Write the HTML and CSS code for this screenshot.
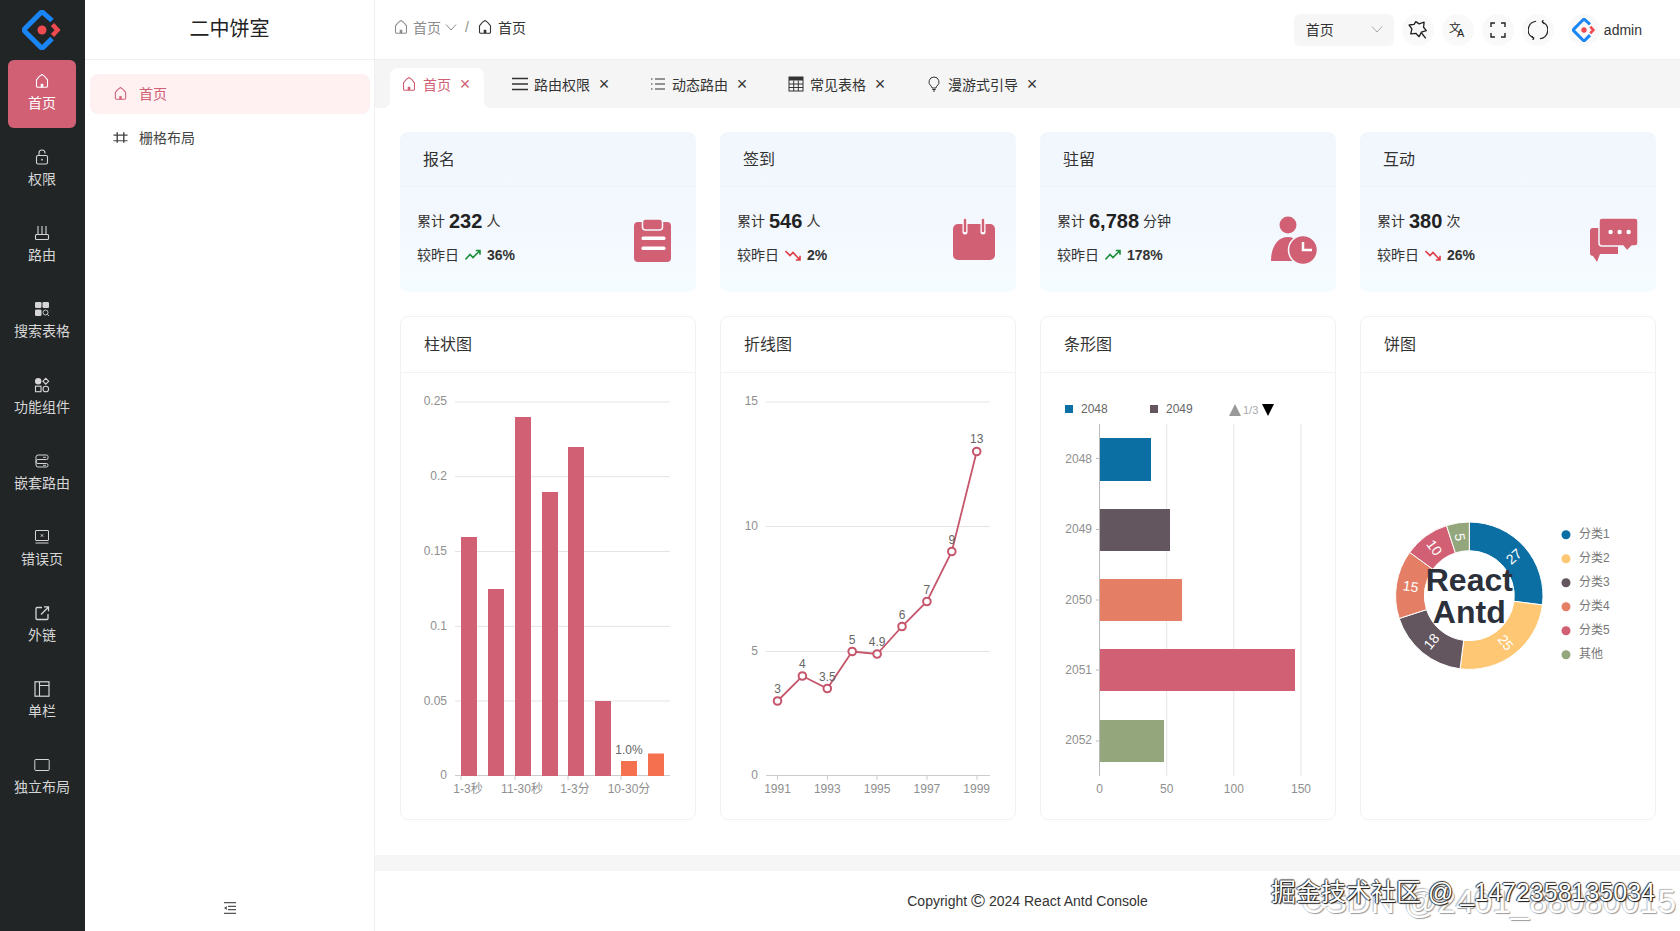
FILE: index.html
```html
<!DOCTYPE html>
<html lang="zh-CN">
<head>
<meta charset="utf-8">
<title>React Antd Console</title>
<link rel="stylesheet" href="styles.css">
</head>
<body>
<svg class="defs" xmlns="http://www.w3.org/2000/svg">
  <symbol id="i-logo" viewBox="0 0 40 40"><path d="M30 10.500 21.500 3a2 2 0 0 0-3 0L3 18.500a2 2 0 0 0 0 3L18.500 37a2 2 0 0 0 3 0l8.500-8.500" fill="none" stroke="#1a85f5" stroke-width="5"/><path d="M30.500 14.500 35.500 20l-5 5.500" fill="none" stroke="#ef4a50" stroke-width="4.500"/><circle cx="20" cy="20" r="4.500" fill="#ef4a50"/></symbol>
  <symbol id="i-home" viewBox="0 0 16 16"><path d="M2.500 6.800C4 4.800 6 2.600 8 1.600c2 1 4 3.200 5.500 5.200V13a1.200 1.200 0 0 1-1.200 1.200H3.700A1.200 1.200 0 0 1 2.500 13z" fill="none" stroke="currentColor" stroke-width="1.100"/><rect x="6.700" y="10.800" width="2.600" height="3.400" fill="currentColor"/></symbol>
  <symbol id="i-lock" viewBox="0 0 16 16"><rect x="2.500" y="6.500" width="11" height="8.500" rx="1.500" fill="none" stroke="currentColor" stroke-width="1.100"/><path d="M5 6.500V4a3 3 0 0 1 6 0v.6" fill="none" stroke="currentColor" stroke-width="1.100"/><circle cx="8" cy="10.700" r=".9" fill="currentColor"/></symbol>
  <symbol id="i-router" viewBox="0 0 16 16"><path d="M4 1v8.500M8 1v8.500M12 1v8.500" fill="none" stroke="currentColor" stroke-width="1.100"/><rect x="1.500" y="9.500" width="13" height="5" rx="1" fill="none" stroke="currentColor" stroke-width="1.100"/></symbol>
  <symbol id="i-search" viewBox="0 0 16 16"><rect x="1" y="1" width="6.500" height="6" rx="1.300" fill="currentColor"/><rect x="8.500" y="1" width="6.500" height="6" rx="1.300" fill="currentColor"/><rect x="1" y="8.500" width="6.500" height="6.500" rx="1.300" fill="currentColor"/><circle cx="11.500" cy="11.500" r="2.500" fill="none" stroke="currentColor" stroke-width=".9"/><path d="M13.300 13.300 15 15" stroke="currentColor" stroke-width=".9"/></symbol>
  <symbol id="i-func" viewBox="0 0 16 16"><circle cx="4.200" cy="4.200" r="3.200" fill="currentColor"/><path d="M11.800 1.300 14.700 4.200 11.800 7.100 8.900 4.200z" fill="none" stroke="currentColor" stroke-width="1.100"/><rect x="1.500" y="9.200" width="5.500" height="5.500" fill="none" stroke="currentColor" stroke-width="1.100"/><circle cx="11.800" cy="12" r="2.800" fill="none" stroke="currentColor" stroke-width="1.100"/></symbol>
  <symbol id="i-nest" viewBox="0 0 16 16"><path d="M4 2h8.500a1.500 1.500 0 0 1 1.500 1.500V5a1.500 1.500 0 0 1-1.500 1.500H4A2 2 0 0 0 4 10.500h8.500A1.500 1.500 0 0 1 14 12v.5a1.500 1.500 0 0 1-1.500 1.500H4a2 2 0 0 1-2-2V4a2 2 0 0 1 2-2z" fill="none" stroke="currentColor" stroke-width="1"/><path d="M9 4.300h3M9 12.300h3" stroke="currentColor" stroke-width=".9"/></symbol>
  <symbol id="i-error" viewBox="0 0 16 16"><rect x="1.500" y="1.500" width="13" height="10" rx=".5" fill="none" stroke="currentColor" stroke-width="1"/><path d="M1.500 14h13" stroke="currentColor" stroke-width="1"/><path d="M6.800 5.300 9.200 7.700M9.200 5.300 6.800 7.700" stroke="currentColor" stroke-width="1"/></symbol>
  <symbol id="i-ext" viewBox="0 0 16 16"><path d="M8 2.500H3a1 1 0 0 0-1 1V13.500a1 1 0 0 0 1 1h10a1 1 0 0 0 1-1V9" fill="none" stroke="currentColor" stroke-width="1.300"/><path d="M7 9.500 14 2.500M10 1.800h4.500V6.300" fill="none" stroke="currentColor" stroke-width="1.300"/></symbol>
  <symbol id="i-col" viewBox="0 0 16 16"><rect x="1" y=".8" width="14" height="14.400" fill="none" stroke="currentColor" stroke-width="1.200"/><path d="M5.500 1v14M5.500 4.500h9.500" fill="none" stroke="currentColor" stroke-width="1.100"/></symbol>
  <symbol id="i-box" viewBox="0 0 16 16"><rect x=".8" y="2.500" width="14.400" height="11" rx="1" fill="none" stroke="currentColor" stroke-width="1"/></symbol>
  <symbol id="i-grid" viewBox="0 0 16 16"><path d="M.5 5.500h15M.5 11.500h15" fill="none" stroke="currentColor" stroke-width="1.200"/><path d="M4.500 2.500v11M11.500 2.500v11" fill="none" stroke="currentColor" stroke-width="1.500"/></symbol>
  <symbol id="i-collapse" viewBox="0 0 12 12"><path d="M0 .7h12M4 4.300h8M4 7.700h8M0 11.300h12" fill="none" stroke="currentColor" stroke-width="1.300"/><path d="M0 6 2.800 4v4z" fill="currentColor"/></symbol>
  <symbol id="i-lines" viewBox="0 0 16 16"><path d="M0 2.500h16M0 8h16M0 13.500h16" fill="none" stroke="currentColor" stroke-width="1.600"/></symbol>
  <symbol id="i-ul" viewBox="0 0 16 16"><path d="M5 3h10M5 8h10M5 13h10" fill="none" stroke="currentColor" stroke-width="1.200"/><path d="M1 3h1.500M1 8h1.500M1 13h1.500" fill="none" stroke="currentColor" stroke-width="1.200"/></symbol>
  <symbol id="i-table" viewBox="0 0 16 16"><rect x="1" y="1" width="14" height="14" fill="none" stroke="currentColor" stroke-width="1"/><rect x="1" y="1" width="14" height="3.500" fill="currentColor"/><path d="M1 8h14M1 11.500h14M5.700 4.500V15M10.300 4.500V15" fill="none" stroke="currentColor" stroke-width="1"/></symbol>
  <symbol id="i-bulb" viewBox="0 0 16 16"><path d="M8 1a5 5 0 0 0-3 9c.6.5 1 1.200 1 2h4c0-.8.400-1.500 1-2a5 5 0 0 0-3-9zM6.300 13.500h3.400M7 15h2" fill="none" stroke="currentColor" stroke-width="1"/></symbol>
  <symbol id="i-pin" viewBox="0 0 18 18"><path d="M7 1.500 10 3.500 14.500 2 14 6.500 16.500 9.500 12 11 10 15 7 12 2.500 12.500 3.500 8 1 4.500 5.500 4z" fill="none" stroke="currentColor" stroke-width="1.200" stroke-linejoin="round"/><path d="M12 11.500 16 16.500" stroke="currentColor" stroke-width="1.200"/></symbol>
  <symbol id="i-full" viewBox="0 0 16 16"><path d="M1 5V1h4M11 1h4v4M15 11v4h-4M5 15H1v-4" fill="none" stroke="currentColor" stroke-width="1.400"/></symbol>
  <symbol id="i-sync" viewBox="0 0 16 16"><path d="M6.500 1A7 7 0 0 0 4 14.200M9.500 15A7 7 0 0 0 12 1.800" fill="none" stroke="currentColor" stroke-width="1"/><path d="M2.800 12.800 4.600 14.500 3.800 16M13.200 3.200 11.400 1.500 12.200 0" fill="none" stroke="currentColor" stroke-width="1"/></symbol>
  <symbol id="i-chev" viewBox="0 0 12 12"><path d="M1 3.500 6 9 11 3.500" fill="none" stroke="currentColor" stroke-width="1"/></symbol>
  <symbol id="i-up" viewBox="0 0 16 12"><path d="M.5 10.500 5 5.500 8 8.500 14.500 2M10.800 1.500H15V5.700" fill="none" stroke="#1f8f3b" stroke-width="1.600"/></symbol>
  <symbol id="i-down" viewBox="0 0 16 12"><path d="M.5 2 5 6.500 8 3.500 14.500 10.500M10.800 11H15V6.800" fill="none" stroke="#e03c46" stroke-width="1.600"/></symbol>
  <symbol id="s-clip" viewBox="0 0 48 48"><rect x="4" y="6" width="37" height="40" rx="4" fill="#d16075"/><rect x="12.500" y="3" width="20" height="11" rx="3" fill="#d16075" stroke="#f4f8fe" stroke-width="1.500"/><rect x="11.500" y="20.500" width="24" height="3.500" rx="1.500" fill="#fff"/><rect x="11.500" y="30.500" width="24" height="3.500" rx="1.500" fill="#fff"/></symbol>
  <symbol id="s-cal" viewBox="0 0 48 48"><rect x="3" y="8" width="42" height="36" rx="5" fill="#d16075"/><path d="M15 5v11M33 5v11" stroke="#fff" stroke-width="5" stroke-linecap="round"/><path d="M15 4v11M33 4v11" stroke="#d16075" stroke-width="2.500" stroke-linecap="round"/></symbol>
  <symbol id="s-user" viewBox="0 0 48 48"><circle cx="18" cy="9" r="8.500" fill="#d16075"/><path d="M1 45C1 30 8 21 18 21c8 0 14 7 15 24z" fill="#d16075"/><circle cx="33" cy="34" r="14.500" fill="#d16075" stroke="#f4f9fe" stroke-width="1.500"/><path d="M33 26V34H42" fill="none" stroke="#fff" stroke-width="2.500"/></symbol>
  <symbol id="s-chat" viewBox="0 0 48 48"><path d="M3 12H28V38H10L7 46 3 40A3 3 0 0 1 0 37V15A3 3 0 0 1 3 12z" fill="#d16075"/><path d="M12 2H45A3 3 0 0 1 48 5V27A3 3 0 0 1 45 30H42L37 35 33 30H12A3 3 0 0 1 9 27V5A3 3 0 0 1 12 2z" fill="#d16075" stroke="#f4f9fe" stroke-width="1.500"/><circle cx="20.600" cy="16" r="2.200" fill="#fff"/><circle cx="29.600" cy="16" r="2.200" fill="#fff"/><circle cx="38.600" cy="16" r="2.200" fill="#fff"/></symbol>
</svg>

<div class="app">
  <nav class="rail">
    <div class="rail-logo"><svg class="logo-mark"><use href="#i-logo"/></svg></div>
    <a class="rail-item active"><svg class="rail-icon"><use href="#i-home"/></svg><span>首页</span></a>
    <a class="rail-item"><svg class="rail-icon"><use href="#i-lock"/></svg><span>权限</span></a>
    <a class="rail-item"><svg class="rail-icon"><use href="#i-router"/></svg><span>路由</span></a>
    <a class="rail-item"><svg class="rail-icon"><use href="#i-search"/></svg><span>搜索表格</span></a>
    <a class="rail-item"><svg class="rail-icon"><use href="#i-func"/></svg><span>功能组件</span></a>
    <a class="rail-item"><svg class="rail-icon"><use href="#i-nest"/></svg><span>嵌套路由</span></a>
    <a class="rail-item"><svg class="rail-icon"><use href="#i-error"/></svg><span>错误页</span></a>
    <a class="rail-item"><svg class="rail-icon"><use href="#i-ext"/></svg><span>外链</span></a>
    <a class="rail-item"><svg class="rail-icon"><use href="#i-col"/></svg><span>单栏</span></a>
    <a class="rail-item"><svg class="rail-icon"><use href="#i-box"/></svg><span>独立布局</span></a>
  </nav>

  <aside class="side">
    <div class="side-title">二中饼室</div>
    <div class="side-menu">
      <a class="side-item active"><svg class="side-icon"><use href="#i-home"/></svg><span>首页</span></a>
      <a class="side-item"><svg class="side-icon"><use href="#i-grid"/></svg><span>栅格布局</span></a>
    </div>
    <div class="side-foot"><svg class="collapse-icon"><use href="#i-collapse"/></svg></div>
  </aside>

  <main class="main">
    <header class="top">
      <div class="crumbs">
        <span class="crumb muted"><svg class="ic16"><use href="#i-home"/></svg>首页<svg class="ic-chev"><use href="#i-chev"/></svg></span>
        <span class="crumb-sep">/</span>
        <span class="crumb"><svg class="ic16"><use href="#i-home"/></svg>首页</span>
      </div>
      <div class="tools">
        <div class="select"><span>首页</span><svg class="ic-chev pale"><use href="#i-chev"/></svg></div>
        <span class="tool"><svg class="ic18"><use href="#i-pin"/></svg></span>
        <span class="tool"><svg class="ic18" viewBox="0 0 22 22"><text class="tr-a" x="1" y="13">文</text><text class="tr-b" x="10" y="19">A</text></svg></span>
        <span class="tool"><svg class="ic16"><use href="#i-full"/></svg></span>
        <span class="tool"><svg class="ic18"><use href="#i-sync"/></svg></span>
        <span class="tool user"><svg class="ic24"><use href="#i-logo"/></svg></span>
        <span class="user-name">admin</span>
      </div>
    </header>

    <div class="tabs">
      <div class="tab active"><svg class="ic16"><use href="#i-home"/></svg><span>首页</span><b class="x">×</b></div>
      <div class="tab"><svg class="ic16"><use href="#i-lines"/></svg><span>路由权限</span><b class="x">×</b></div>
      <div class="tab"><svg class="ic16"><use href="#i-ul"/></svg><span>动态路由</span><b class="x">×</b></div>
      <div class="tab"><svg class="ic16"><use href="#i-table"/></svg><span>常见表格</span><b class="x">×</b></div>
      <div class="tab"><svg class="ic16"><use href="#i-bulb"/></svg><span>漫游式引导</span><b class="x">×</b></div>
    </div>

    <section class="content">
      <div class="grid">
        <article class="stat">
          <h3>报名</h3>
          <div class="stat-body">
            <div class="stat-text">
              <p class="stat-total">累计 <strong>232</strong> 人</p>
              <p class="stat-delta">较昨日 <svg class="trend"><use href="#i-up"/></svg> <strong>36%</strong></p>
            </div>
            <svg class="stat-icon"><use href="#s-clip"/></svg>
          </div>
        </article>
        <article class="stat">
          <h3>签到</h3>
          <div class="stat-body">
            <div class="stat-text">
              <p class="stat-total">累计 <strong>546</strong> 人</p>
              <p class="stat-delta">较昨日 <svg class="trend"><use href="#i-down"/></svg> <strong>2%</strong></p>
            </div>
            <svg class="stat-icon"><use href="#s-cal"/></svg>
          </div>
        </article>
        <article class="stat">
          <h3>驻留</h3>
          <div class="stat-body">
            <div class="stat-text">
              <p class="stat-total">累计 <strong>6,788</strong> 分钟</p>
              <p class="stat-delta">较昨日 <svg class="trend"><use href="#i-up"/></svg> <strong>178%</strong></p>
            </div>
            <svg class="stat-icon"><use href="#s-user"/></svg>
          </div>
        </article>
        <article class="stat">
          <h3>互动</h3>
          <div class="stat-body">
            <div class="stat-text">
              <p class="stat-total">累计 <strong>380</strong> 次</p>
              <p class="stat-delta">较昨日 <svg class="trend"><use href="#i-down"/></svg> <strong>26%</strong></p>
            </div>
            <svg class="stat-icon"><use href="#s-chat"/></svg>
          </div>
        </article>
      </div>

      <div class="grid charts">
        <article class="chart">
          <h3>柱状图</h3>
          <svg class="plot" viewBox="401 373 294 446">
            <g class="gridline">
              <path d="M455 402H670M455 476.700H670M455 551.500H670M455 626.400H670M455 701H670"/>
            </g>
            <path class="axisline" d="M455 775.500H670M461 776v4M515 776v4M568 776v4M621 776v4"/>
            <g class="bar-a">
              <rect x="461" y="537" width="16" height="239"/>
              <rect x="488" y="589" width="16" height="187"/>
              <rect x="515" y="417" width="16" height="359"/>
              <rect x="542" y="492" width="16" height="284"/>
              <rect x="568" y="447" width="16" height="329"/>
              <rect x="595" y="701" width="16" height="75"/>
            </g>
            <g class="bar-b">
              <rect x="621" y="761" width="16" height="15"/>
              <rect x="648" y="753.500" width="16" height="22.500"/>
            </g>
            <g class="tick end">
              <text x="447" y="405">0.25</text><text x="447" y="480">0.2</text><text x="447" y="555">0.15</text><text x="447" y="630">0.1</text><text x="447" y="705">0.05</text><text x="447" y="779">0</text>
            </g>
            <g class="tick mid">
              <text x="468" y="793">1-3秒</text><text x="522" y="793">11-30秒</text><text x="575" y="793">1-3分</text><text x="629" y="793">10-30分</text>
            </g>
            <text class="data mid" x="629" y="754">1.0%</text>
          </svg>
        </article>

        <article class="chart">
          <h3>折线图</h3>
          <svg class="plot" viewBox="721 373 294 446">
            <path class="gridline" d="M766 402H990M766 526.500H990M766 651.500H990"/>
            <path class="axisline" d="M766 775.500H990M777.500 776v4M827.500 776v4M877 776v4M927 776v4M977 776v4"/>
            <polyline class="line" points="777.500,701 802.400,676 827.300,688.500 852.200,651.500 877.100,654 902,626.500 926.900,601.500 951.800,551.500 976.700,451.500"/>
            <g class="dot">
              <circle cx="777.500" cy="701" r="3.800"/><circle cx="802.400" cy="676" r="3.800"/><circle cx="827.300" cy="688.500" r="3.800"/><circle cx="852.200" cy="651.500" r="3.800"/><circle cx="877.100" cy="654" r="3.800"/><circle cx="902" cy="626.500" r="3.800"/><circle cx="926.900" cy="601.500" r="3.800"/><circle cx="951.800" cy="551.500" r="3.800"/><circle cx="976.700" cy="451.500" r="3.800"/>
            </g>
            <g class="data mid">
              <text x="777.500" y="693">3</text><text x="802.400" y="668">4</text><text x="827.300" y="680.500">3.5</text><text x="852.200" y="643.500">5</text><text x="877.100" y="646">4.9</text><text x="902" y="618.500">6</text><text x="926.900" y="593.500">7</text><text x="951.800" y="543.500">9</text><text x="976.700" y="442.500">13</text>
            </g>
            <g class="tick end">
              <text x="758" y="405">15</text><text x="758" y="530">10</text><text x="758" y="655">5</text><text x="758" y="779">0</text>
            </g>
            <g class="tick mid">
              <text x="777.500" y="793">1991</text><text x="827.300" y="793">1993</text><text x="877.100" y="793">1995</text><text x="926.900" y="793">1997</text><text x="976.700" y="793">1999</text>
            </g>
          </svg>
        </article>

        <article class="chart">
          <h3>条形图</h3>
          <svg class="plot" viewBox="1041 373 294 446">
            <path class="gridline" d="M1166.700 424V776M1233.800 424V776M1301 424V776"/>
            <path class="axisline-thin" d="M1099.500 424V776M1096 458.500h3.500M1096 529.500h3.500M1096 600h3.500M1096 670h3.500M1096 741h3.500"/>
            <rect class="c1" x="1065" y="405" width="8" height="8"/>
            <text class="legend-label" x="1081" y="413">2048</text>
            <rect class="c3" x="1150" y="405" width="8" height="8"/>
            <text class="legend-label" x="1166" y="413">2049</text>
            <path class="tri-up" d="M1235 404 1241 416H1229z"/>
            <text class="pager" x="1243" y="414">1/3</text>
            <path d="M1262 404H1274L1268 416z"/>
            <rect class="c1" x="1100" y="438" width="51" height="43"/>
            <rect class="c3" x="1100" y="509" width="70" height="42"/>
            <rect class="c4" x="1100" y="579" width="82" height="42"/>
            <rect class="c5" x="1100" y="649" width="195" height="42"/>
            <rect class="c6" x="1100" y="720" width="64" height="42"/>
            <g class="tick end">
              <text x="1092" y="463">2048</text><text x="1092" y="533">2049</text><text x="1092" y="604">2050</text><text x="1092" y="674">2051</text><text x="1092" y="744">2052</text>
            </g>
            <g class="tick mid">
              <text x="1099.500" y="793">0</text><text x="1166.700" y="793">50</text><text x="1233.800" y="793">100</text><text x="1301" y="793">150</text>
            </g>
          </svg>
        </article>

        <article class="chart">
          <h3>饼图</h3>
          <svg class="plot" viewBox="1361 373 294 446">
            <g class="pie">
              <path class="c1" d="M0 -73.700A73.700 73.700 0 0 1 73.120 9.230L44.640 5.640A45 45 0 0 0 0 -45Z"/>
              <path class="c2" d="M73.120 9.230A73.700 73.700 0 0 1 -9.230 73.120L-5.640 44.640A45 45 0 0 0 44.640 5.640Z"/>
              <path class="c3" d="M-9.230 73.120A73.700 73.700 0 0 1 -70.090 22.770L-42.800 13.910A45 45 0 0 0 -5.640 44.640Z"/>
              <path class="c4" d="M-70.090 22.770A73.700 73.700 0 0 1 -59.620 -43.320L-36.410 -26.450A45 45 0 0 0 -42.800 13.910Z"/>
              <path class="c5" d="M-59.620 -43.320A73.700 73.700 0 0 1 -22.770 -70.090L-13.910 -42.800A45 45 0 0 0 -36.410 -26.450Z"/>
              <path class="c6" d="M-22.770 -70.090A73.700 73.700 0 0 1 0 -73.700L0 -45A45 45 0 0 0 -13.910 -42.800Z"/>
              <text transform="translate(44.500 -39.200) rotate(-41.400)" dy=".35em">27</text>
              <text transform="translate(36.400 46.900) rotate(52.200)" dy=".35em">25</text>
              <text transform="translate(-37.800 45.700) rotate(-50.400)" dy=".35em">18</text>
              <text transform="translate(-58.600 -9.300) rotate(9)" dy=".35em">15</text>
              <text transform="translate(-34.900 -48) rotate(54)" dy=".35em">10</text>
              <text transform="translate(-9.300 -58.600) rotate(81)" dy=".35em">5</text>
            </g>
            <g class="pie-title">
              <text x="1469.300" y="591">React</text>
              <text x="1469.300" y="623">Antd</text>
            </g>
            <g class="legend-text">
              <circle class="c1" cx="1566" cy="534.700" r="4.500"/><text x="1579" y="538">分类1</text>
              <circle class="c2" cx="1566" cy="558.700" r="4.500"/><text x="1579" y="562">分类2</text>
              <circle class="c3" cx="1566" cy="582.700" r="4.500"/><text x="1579" y="586">分类3</text>
              <circle class="c4" cx="1566" cy="606.700" r="4.500"/><text x="1579" y="610">分类4</text>
              <circle class="c5" cx="1566" cy="630.700" r="4.500"/><text x="1579" y="634">分类5</text>
              <circle class="c6" cx="1566" cy="654.700" r="4.500"/><text x="1579" y="658">其他</text>
            </g>
          </svg>
        </article>
      </div>
    </section>

    <footer class="foot">Copyright <span class="copy">©</span> 2024 React Antd Console</footer>
  </main>
</div>

<div class="mark mark-csdn">CSDN @2401_88080015</div>
<div class="mark mark-juejin">掘金技术社区 @ _1472358135034</div>
</body>
</html>
```

FILE: styles.css
```css
* { box-sizing: border-box; }
html, body { margin: 0; height: 100%; }
body {
  font-family: "Liberation Sans", "Noto Sans CJK SC", sans-serif;
  font-size: 14px;
  color: #333;
  background: #fff;
  overflow: hidden;
}
svg text { font-family: "Liberation Sans", "Noto Sans CJK SC", sans-serif; }
h3, p { margin: 0; font-weight: 400; }
.defs { display: none; }

.app { display: flex; height: 931px; }

/* left rail */
.rail { width: 85px; flex: none; background: #212526; color: #d6d6d6; display: flex; flex-direction: column; align-items: center; padding-right: 1px; }
.rail-logo { height: 60px; width: 100%; display: flex; align-items: center; justify-content: center; }
.logo-mark { width: 40px; height: 40px; }
.rail-item { width: 68px; height: 68px; margin-bottom: 8px; border-radius: 6px; display: flex; flex-direction: column; align-items: center; padding-top: 13px; line-height: 20px; white-space: nowrap; }
.rail-item.active { background: #d16075; color: #fff; }
.rail-icon { width: 16px; height: 16px; margin-bottom: 4px; }

/* second column */
.side { width: 290px; flex: none; border-right: 1px solid #f0f0f0; display: flex; flex-direction: column; }
.side-title { height: 60px; border-bottom: 1px solid #f0f0f0; font-size: 20px; line-height: 58px; text-align: center; color: #222; }
.side-menu { flex: 1; padding: 14px 4px 0 5px; }
.side-item { height: 40px; margin-bottom: 4px; border-radius: 8px; display: flex; align-items: center; padding: 0 0 2px 23px; gap: 11px; color: #444; }
.side-item.active { background: #fff0f2; color: #d16075; }
.side-icon { width: 15px; height: 15px; }
.side-foot { height: 29px; display: flex; justify-content: center; }
.collapse-icon { width: 12px; height: 12px; color: #555; }

/* header */
.main { flex: 1; min-width: 0; display: flex; flex-direction: column; }
.top { height: 60px; flex: none; border-bottom: 1px solid #eee; display: flex; align-items: center; justify-content: space-between; padding: 0 38px 0 18px; }
.crumbs { display: flex; align-items: center; gap: 8px; margin-top: -6px; }
.crumb { display: flex; align-items: center; gap: 5px; color: #333; }
.crumb.muted { color: #8c8c8c; gap: 4px; }
.crumb-sep { color: #8c8c8c; }
.ic16 { width: 16px; height: 16px; flex: none; }
.ic18 { width: 20px; height: 20px; flex: none; }
.ic24 { width: 24px; height: 24px; }
.ic-chev { width: 12px; height: 12px; flex: none; }
.ic-chev.pale { color: #aaa; }
.tools { display: flex; align-items: center; gap: 8px; }
.select { width: 100px; height: 32px; background: #f6f6f6; border-radius: 6px; display: flex; align-items: center; justify-content: space-between; padding: 0 11px 2px 12px; }
.tool { width: 32px; height: 32px; border-radius: 50%; background: #f9f9f9; display: flex; align-items: center; justify-content: center; color: #222; }
.tool.user { margin-left: 6px; }
.user-name { font-size: 14px; margin-left: -4px; }
.tr-a { font-size: 13px; fill: #222; }
.tr-b { font-size: 12px; fill: #222; }

/* tabs */
.tabs { height: 48px; flex: none; background: #f5f5f5; display: flex; align-items: flex-end; gap: 16px; padding-left: 15px; }
.tab { position: relative; height: 40px; padding: 0 14px 9px 12px; display: flex; align-items: center; gap: 6px; color: #333; border-radius: 8px 8px 0 0; white-space: nowrap; }
.tab .x { margin-left: 4px; width: 8px; font-weight: 400; font-size: 18px; line-height: 16px; display: flex; justify-content: center; }
.tab.active { background: #fff; color: #d16075; padding-left: 11px; padding-right: 15px; }
.tab.active::before, .tab.active::after { content: ""; position: absolute; bottom: 0; width: 8px; height: 8px; }
.tab.active::before { left: -8px; background: radial-gradient(circle at 0 0, #f5f5f5 8px, #fff 8.5px); }
.tab.active::after { right: -8px; background: radial-gradient(circle at 100% 0, #f5f5f5 8px, #fff 8.5px); }

/* content */
.content { flex: 1; min-height: 0; padding: 24px 24px 0 25px; }
.grid { display: grid; grid-template-columns: repeat(4, 296px); gap: 24px; }
.charts { margin-top: 24px; }

.stat { height: 160px; border-radius: 8px; background: linear-gradient(180deg, #f2f7fe 0%, #f3f8fe 60%, #f5fcff 100%); }
.stat h3 { height: 55px; line-height: 56px; padding-left: 23px; font-size: 16px; color: #333; border-bottom: 1px solid #edf2fa; }
.stat-body { display: flex; justify-content: space-between; align-items: flex-start; padding: 20px 18px 0 17px; }
.stat-text { display: flex; flex-direction: column; gap: 6px; }
.stat-total, .stat-delta { height: 28px; line-height: 28px; display: flex; align-items: center; gap: 4px; color: #333; white-space: nowrap; }
.stat-total strong { font-size: 20px; font-weight: 700; color: #222; }
.stat-delta strong { font-size: 14px; font-weight: 700; color: #333; }
.stat-delta { gap: 6px; }
.trend { width: 16px; height: 12px; }
.stat-icon { width: 48px; height: 48px; margin-top: 9px; }

.chart { height: 504px; border: 1px solid #f2f2f2; border-radius: 8px; }
.chart h3 { height: 56px; line-height: 56px; padding-left: 23px; font-size: 16px; color: #333; border-bottom: 1px solid #f2f2f2; }
.plot { display: block; width: 294px; height: 446px; }

.gridline { fill: none; stroke: #e4e4e4; stroke-width: 1; }
.axisline { fill: none; stroke: #ccc; stroke-width: 1; }
.axisline-thin { fill: none; stroke: #bbb; stroke-width: 1; }
.tick { font-size: 12px; fill: #8f8f8f; }
.legend-label { font-size: 12px; fill: #666; }
.end { text-anchor: end; }
.mid { text-anchor: middle; }
.data { font-size: 12px; fill: #666; }
.pager { font-size: 11px; fill: #aaa; }
.tri-up { fill: #999; }
.bar-a { fill: #d16075; }
.bar-b { fill: #f4704f; }
.line { fill: none; stroke: #c5566c; stroke-width: 1.800; }
.dot { fill: #fff; stroke: #c5566c; stroke-width: 2; }
.c1 { fill: #0c6fa3; }
.c2 { fill: #fec773; }
.c3 { fill: #63565f; }
.c4 { fill: #e47f65; }
.c5 { fill: #d16075; }
.c6 { fill: #94a67c; }
.pie { transform: translate(1469.3px, 595.7px); }
.pie path { stroke: #fff; stroke-width: 1; }
.pie text { font-size: 14px; fill: #fff; text-anchor: middle; }
.pie-title { font-size: 32px; font-weight: 700; fill: #2b303b; text-anchor: middle; }
.legend-text { font-size: 12px; }
.legend-text text { fill: #777; }

/* footer */
.foot { height: 76px; flex: none; border-top: 16px solid #f6f6f6; text-align: center; line-height: 60px; color: #333; font-size: 14px; }
.copy { font-size: 19px; line-height: 14px; vertical-align: -1px; }

/* re-post watermarks lying over the page */
.mark { position: absolute; white-space: nowrap; }
.mark-csdn { right: 4px; top: 884px; font-size: 33px; line-height: 36px; color: #fff; text-shadow: 1px 1px 1px #9a9a9a, -1px -1px 1px #bbb; }
.mark-juejin { right: 25px; top: 877px; font-size: 25px; line-height: 30px; color: #fff; text-shadow: 1px 1px 1px #111, -1px 0 1px #333, 0 -1px 1px #333; }
```
